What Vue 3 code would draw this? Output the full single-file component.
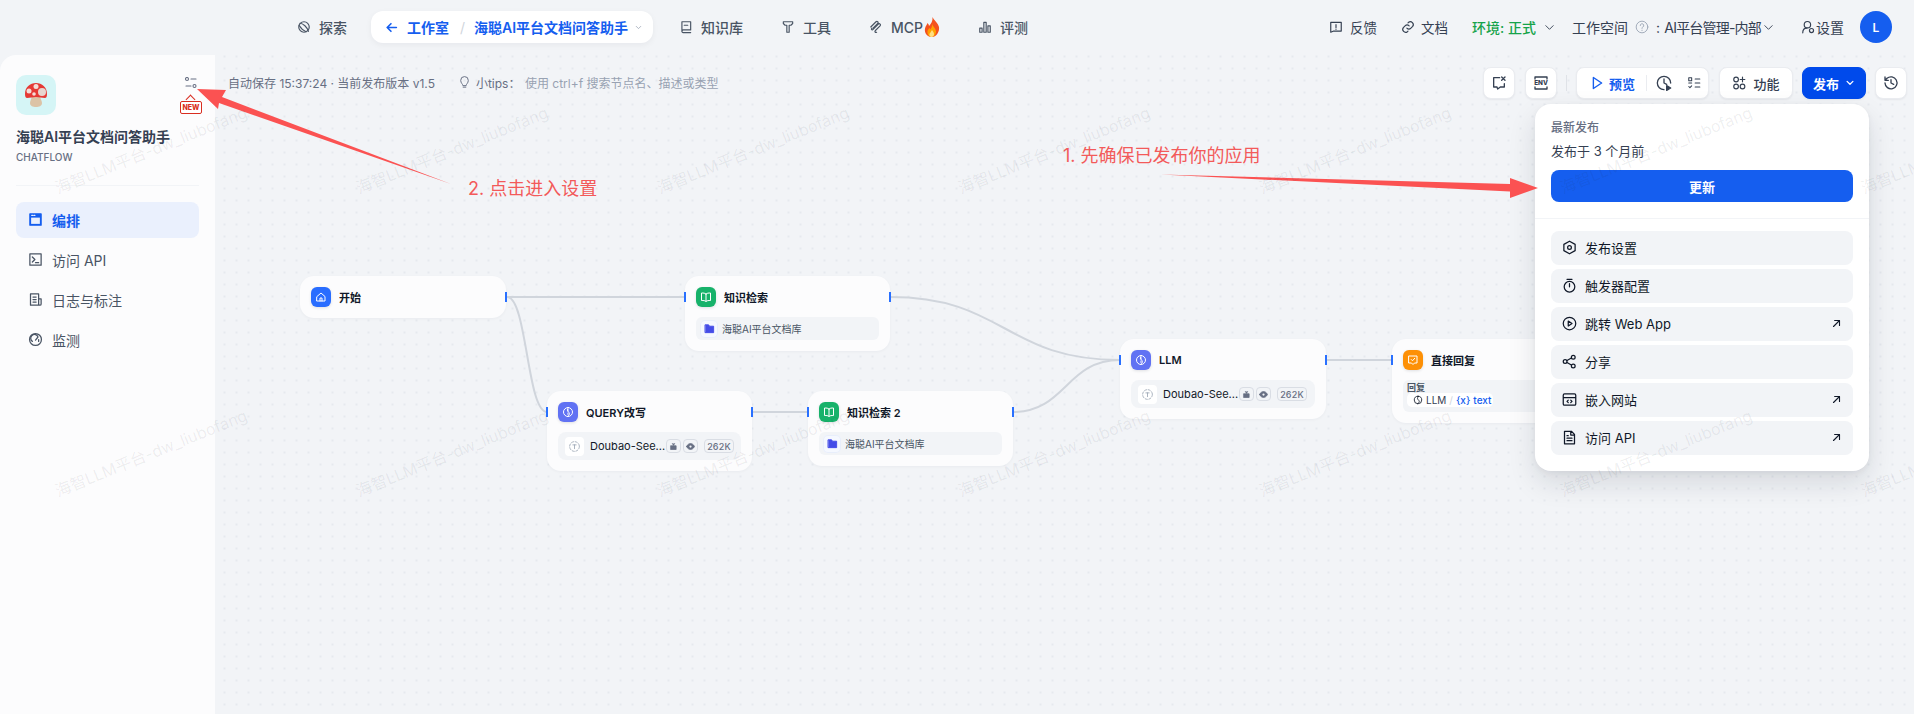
<script setup>
const nodes = [
  { id: 'start', x: 300, y: 276, w: 206, title: '开始', color: '#296dff', icon: 'home', lh: false },
  { id: 'kb1', x: 685, y: 276, w: 205, title: '知识检索', color: '#17b26a', icon: 'book', sub: 'kb', lh: true },
  { id: 'query', x: 547, y: 391, w: 205, title: 'QUERY改写', color: '#6172f3', icon: 'llm', sub: 'model', lh: true },
  { id: 'kb2', x: 808, y: 391, w: 205, title: '知识检索 2', color: '#17b26a', icon: 'book', sub: 'kb', lh: true },
  { id: 'llm', x: 1120, y: 339, w: 206, title: 'LLM', color: '#6172f3', icon: 'llm', sub: 'model', lh: true },
  { id: 'reply', x: 1392, y: 339, w: 206, title: '直接回复', color: '#fd9006', icon: 'reply', sub: 'reply', lh: true },
]
const edges = [
  'M507 297H685',
  'M507 297C527 297 527 412 547 412',
  'M752 412H808',
  'M890 297C1005 297 1005 360 1120 360',
  'M1013 412C1066 412 1066 360 1120 360',
  'M1326 360H1392',
]
const menu = [
  { label: '发布设置', icon: 'hex' },
  { label: '触发器配置', icon: 'timer' },
  { label: '跳转 Web App', icon: 'play', ext: true },
  { label: '分享', icon: 'share' },
  { label: '嵌入网站', icon: 'embed', ext: true },
  { label: '访问 API', icon: 'doc', ext: true },
]
const sideNav = [
  { label: '编排', icon: 'window', active: true },
  { label: '访问 API', icon: 'term' },
  { label: '日志与标注', icon: 'log' },
  { label: '监测', icon: 'gauge' },
]
const watermarks = Array.from({ length: 14 }, (_, i) => i)
</script>

<template>
  <div class="page">
    <header class="top">
      <nav class="nav-left">
        <a class="nav-item">
          <svg viewBox="0 0 24 24"><circle cx="12" cy="12" r="9"/><path d="M5 5.500c5 0 13 7 14.500 14M3.500 9c3 5 7 9 12 11"/></svg>
          探索
        </a>
        <div class="crumb">
          <svg class="crumb-back" viewBox="0 0 24 24"><path d="M21 12H4M11 5l-7 7 7 7"/></svg>
          <span class="crumb-a">工作室</span>
          <span class="crumb-sep">/</span>
          <span class="crumb-b">海聪AI平台文档问答助手</span>
          <svg class="crumb-chev" viewBox="0 0 24 24"><path d="M6 9l6 6 6-6"/></svg>
        </div>
        <a class="nav-item">
          <svg viewBox="0 0 24 24"><path d="M5 3h15v14H7.500A2.500 2.500 0 0 0 5 19.500zM5 19.500A2 2 0 0 0 7.500 21.500H20M9 9h6"/></svg>
          知识库
        </a>
        <a class="nav-item">
          <svg viewBox="0 0 24 24"><path d="M4 3h16v3l-3 3h-3v12h-4V9H7L4 6z"/></svg>
          工具
        </a>
        <a class="nav-item nav-mcp">
          <svg viewBox="0 0 24 24"><path d="M3 12L12 3c2-2 5 1 3 3l-8 8M7 16l9-9c2-2 5 1 3 3l-8 8c-2 2 0 4 2 3M5 14c-2 2 0 4 2 2"/></svg>
          <span>MCP</span>
          <svg class="fire" viewBox="0 0 16 20"><path fill="#f4511e" d="M8.500 0c1 3 5.500 5.500 6.500 10 .8 5-3 10-7 10S0 16.500 1 11.500C1.500 9 3 8 3.500 6c1 1 1.500 2 1.500 3C7 7 9 4 8.500 0z"/><path fill="#ffa000" d="M8 7c.5 2 3.500 4 4 7 .3 3-2 6-4.500 6S3 17 3.500 14C4 12 5 12 5.500 11c.5.500.7 1 .8 1.500C7.500 11 8.300 9.500 8 7z"/><path fill="#ffe082" d="M8 13c.5 1 2 2 2 4 0 2-1 3-2.500 3S5 18.500 5.500 17c.3-1 1.500-2 2.500-4z"/></svg>
        </a>
        <a class="nav-item">
          <svg viewBox="0 0 24 24"><path d="M3 14h4v7H3zM10 4h4v17h-4zM17 10h4v11h-4z"/></svg>
          评测
        </a>
      </nav>
      <div class="nav-right">
        <a class="r-item">
          <svg class="i14" viewBox="0 0 24 24"><path d="M3 4h18v15H8l-5 2zM12 8v5M12 15.500v.5"/></svg>
          反馈
        </a>
        <a class="r-item r-doc">
          <svg class="i14" viewBox="0 0 24 24"><path d="M10 14a5 5 0 0 0 7 0l3-3a5 5 0 0 0-7-7l-1 1M14 10a5 5 0 0 0-7 0l-3 3a5 5 0 0 0 7 7l1-1"/></svg>
          文档
        </a>
        <a class="r-env">
          环境: 正式
          <svg class="chev" viewBox="0 0 24 24"><path d="M4 8l8 8 8-8"/></svg>
        </a>
        <a class="r-space">
          <span>工作空间</span>
          <svg class="q" viewBox="0 0 24 24"><circle cx="12" cy="12" r="10"/><path d="M9 9.500a3 3 0 1 1 4.500 2.500c-1 .6-1.500 1-1.500 2.500M12 17.500v.5"/></svg>
          <span class="r-space-name">: AI平台管理-内部</span>
          <svg class="chev chev-tight" viewBox="0 0 24 24"><path d="M4 8l8 8 8-8"/></svg>
        </a>
        <a class="r-set">
          <svg class="i14" viewBox="0 0 24 24"><circle cx="11" cy="8" r="5.500"/><path d="M3 22c0-5 3-8 7-8"/><circle cx="18" cy="18" r="3.500"/></svg>
          设置
        </a>
        <div class="avatar">L</div>
      </div>
    </header>

    <div class="body">
      <aside class="side">
        <div class="side-head">
          <div class="logo">
            <svg width="24" height="26" viewBox="0 0 24 26">
              <path fill="#dcc3a6" d="M8 14h8c.5 3 2 5 2 7 0 3-3 4-6 4s-6-1-6-4c0-2 1.500-4 2-7z"/>
              <path fill="#e53935" d="M1 12C1 5 6 1 12 1s11 4 11 11c0 3-1 4-2 4-3 0-6-1-9-1s-6 1-9 1c-1 0-2-1-2-4z"/>
              <circle cx="12" cy="4.500" r="2.500" fill="#f5dcd8"/>
              <circle cx="5" cy="9" r="2.500" fill="#f5dcd8"/>
              <circle cx="18" cy="10" r="4" fill="#e8d5cf"/>
              <circle cx="10" cy="12" r="1.800" fill="#f5dcd8"/>
            </svg>
          </div>
          <div class="side-tools">
            <svg class="tune" viewBox="0 0 12 12"><circle cx="2" cy="2" r="1.500"/><path d="M6 2h5M1 9h5"/><circle cx="9.500" cy="9" r="1.500"/></svg>
            <div class="new-badge"><span>NEW</span></div>
          </div>
        </div>
        <div class="app-name">海聪AI平台文档问答助手</div>
        <div class="app-type">CHATFLOW</div>
        <div class="side-line"></div>
        <ul class="side-nav">
          <li v-for="n in sideNav" :key="n.label" class="side-item" :class="{ active: n.active }">
            <svg class="i16" viewBox="0 0 24 24">
              <template v-if="n.icon === 'window'"><path class="filled" d="M3 3h18v18H3z"/><path class="cut" d="M5 9h14v10H5z"/><path class="cut" d="M6 5.500h1.500M9.500 5.500H11"/></template>
              <template v-if="n.icon === 'term'"><path d="M3 3h18v18H3zM7 8l4 4-4 4M12 17h5"/></template>
              <template v-if="n.icon === 'log'"><path d="M4 3h13v18H4zM8 8h5M8 12h5M8 16h5M17 11h4v8a2 2 0 0 1-4 0"/></template>
              <template v-if="n.icon === 'gauge'"><circle cx="12" cy="12" r="9.500"/><path d="M7 15a6 6 0 1 1 9-7M12 13l4-5M17 12v3"/></template>
            </svg>
            <span>{{ n.label }}</span>
          </li>
        </ul>
      </aside>

      <main class="canvas">
        <div class="bar">
          <span class="status">自动保存 15:37:24 · 当前发布版本 v1.5</span>
          <span class="tips">
            <svg class="bulb" viewBox="0 0 24 24"><path d="M9 18c0-2-4-4-4-9a7 7 0 1 1 14 0c0 5-4 7-4 9zM9.500 21.500h5"/></svg>
            <span class="tips-a">小tips：</span>
            <span class="tips-b">使用 ctrl+f 搜索节点名、描述或类型</span>
          </span>
          <div class="actions">
            <button class="btn square">
              <svg class="i16" viewBox="0 0 24 24"><path d="M13 4H4v14h5l1 3 4-3h6v-5M16 3l5 5M21 3l-5 5"/></svg>
            </button>
            <button class="btn square">
              <svg class="i16" viewBox="0 0 24 24"><path d="M3 6V3h18v3M3 18v3h18v-3"/><text x="12" y="15.500" text-anchor="middle" class="env">ENV</text></svg>
            </button>
            <span class="vline"></span>
            <div class="btn group">
              <span class="preview">
                <svg class="play" viewBox="0 0 12 14"><path d="M1.500 1l9 6-9 6z"/></svg>
                预览
              </span>
              <span class="g-sep"></span>
              <svg class="i16" viewBox="0 0 24 24"><path d="M12 22a10 10 0 1 1 10-10M12 6v6l4 2"/><path class="fill-ico" d="M16 16l6 3.500-6 3.500z"/></svg>
              <svg class="i14 check" viewBox="0 0 24 24"><path d="M3 3h5v5H3zM14 5h8M14 12h8M14 19h8M3 12h5M3 18l2 2 3-3"/></svg>
            </div>
            <button class="btn func">
              <svg class="i14" viewBox="0 0 24 24"><circle cx="7" cy="6" r="4"/><circle cx="7" cy="18" r="4"/><circle cx="18" cy="18" r="4"/><path d="M18 2v8M14 6h8"/></svg>
              功能
            </button>
            <button class="btn publish">
              发布
              <svg class="pub-chev" viewBox="0 0 24 24"><path d="M5 8l7 7 7-7"/></svg>
            </button>
            <button class="btn square">
              <svg class="i16" viewBox="0 0 24 24"><path d="M3 12a9 9 0 1 0 3-7L3 8M3 3v5h5M12 7v5l4 2"/></svg>
            </button>
          </div>
        </div>
      </main>
    </div>

    <section class="graph">
      <svg class="edges" width="1914" height="714">
        <path v-for="e in edges" :key="e" :d="e"/>
      </svg>
      <article v-for="n in nodes" :key="n.id" class="node" :style="{ left: n.x + 'px', top: n.y + 'px', width: n.w + 'px' }">
        <i v-if="n.lh" class="handle left"></i>
        <i class="handle right"></i>
        <div class="node-head">
          <span class="node-ico" :style="{ background: n.color }">
            <svg viewBox="0 0 24 24">
              <path v-if="n.icon === 'home'" d="M4 11l8-7 8 7v9H4zM10 20v-6h4v6"/>
              <path v-if="n.icon === 'book'" d="M12 6c-2-2-5-2-9-2v15c4 0 7 0 9 2 2-2 5-2 9-2V4c-4 0-7 0-9 2zM12 6v15"/>
              <path v-if="n.icon === 'llm'" d="M12 3a9 9 0 1 0 0 18 9 9 0 0 0 0-18zM13 3c-3 4-3 6 0 9s3 5-2 9M12 7v3M12 14v3"/>
              <path v-if="n.icon === 'reply'" d="M4 4h16v14h-5l-3 3-3-3H4zM8.500 11l2.500 2.500 4.500-5"/>
            </svg>
          </span>
          <span class="node-title">{{ n.title }}</span>
        </div>
        <div v-if="n.sub === 'kb'" class="row row-kb">
          <span class="kb-box"><svg viewBox="0 0 24 24"><path d="M3 4h7l2 3h9v14H3z"/></svg></span>
          <span class="kb-name">海聪AI平台文档库</span>
        </div>
        <div v-if="n.sub === 'model'" class="row row-model">
          <span class="model-box"><svg viewBox="0 0 24 24"><circle cx="12" cy="12" r="9" stroke-dasharray="4 3.100"/><path d="M9 9h6M12 9v7"/></svg></span>
          <span class="model-name">Doubao-See...</span>
          <span class="tag tag-ico"><svg viewBox="0 0 24 24"><path d="M5 10h14v10H5zM9 4l3 5 3-5"/></svg></span>
          <span class="tag tag-ico"><svg viewBox="0 0 24 24"><path d="M1 12c4-6 7-8 11-8s7 2 11 8c-4 6-7 8-11 8s-7-2-11-8z"/><circle class="eye" cx="12" cy="12" r="3"/></svg></span>
          <span class="tag tag-num">262K</span>
        </div>
        <div v-if="n.sub === 'reply'" class="row row-reply">
          <div class="reply-label">回复</div>
          <div class="reply-pill">
            <svg class="reply-ico" viewBox="0 0 24 24"><path d="M12 3a9 9 0 1 0 0 18 9 9 0 0 0 0-18zM13 3c-3 4-3 6 0 9s3 5-2 9"/></svg>
            <span class="reply-src">LLM</span>
            <span class="reply-slash">/</span>
            <span class="reply-var">{x}</span>
            <span class="reply-var">text</span>
          </div>
        </div>
      </article>
    </section>

    <div class="popup">
      <div class="pop-top">
        <div class="pop-label">最新发布</div>
        <div class="pop-time">发布于 3 个月前</div>
        <button class="pop-update">更新</button>
      </div>
      <div class="pop-list">
        <div v-for="m in menu" :key="m.label" class="pop-item">
          <svg class="i16 pop-ico" viewBox="0 0 24 24">
            <template v-if="m.icon === 'hex'"><path d="M12 2l9 5v10l-9 5-9-5V7z"/><circle cx="12" cy="12" r="3"/></template>
            <template v-if="m.icon === 'timer'"><circle cx="12" cy="14" r="8.500"/><path d="M8 2h8M12 9v5"/></template>
            <template v-if="m.icon === 'play'"><circle cx="12" cy="12" r="10"/><path d="M10 8l6 4-6 4z"/></template>
            <template v-if="m.icon === 'share'"><circle cx="18" cy="5" r="3"/><circle cx="5" cy="12" r="3"/><circle cx="18" cy="19" r="3"/><path d="M8 10.500l7-4M8 13.500l7 4"/></template>
            <template v-if="m.icon === 'embed'"><path d="M4 3h16a2 2 0 0 1 2 2v14a2 2 0 0 1-2 2H4a2 2 0 0 1-2-2V5a2 2 0 0 1 2-2zM2 9h20M10 13l-2 2 2 2M14 13l2 2-2 2"/></template>
            <template v-if="m.icon === 'doc'"><path d="M4 2h11l5 5v15H4zM14 2v6h6M8 13h8M8 17h8M8 9h2"/></template>
          </svg>
          <span class="pop-text">{{ m.label }}</span>
          <svg v-if="m.ext" class="pop-ext" viewBox="0 0 12 12"><path d="M2 10l8-8M3.500 2H10v6.500"/></svg>
        </div>
      </div>
    </div>

    <div class="note note-a">1. 先确保已发布你的应用</div>
    <div class="note note-b">2. 点击进入设置</div>
    <svg class="arrows" width="1914" height="714">
      <polygon points="1161,174.500 1510,184 1510,178 1538,188 1510,198 1510,191.500"/>
      <polygon points="197,89 226,90 222,97 451,184 219,103 218,109"/>
    </svg>

    <div class="marks">
      <span v-for="m in watermarks" :key="m" class="mark"><b>海智LLM平台-dw_liubofang</b></span>
    </div>
  </div>
</template>

<style>
html, body { margin: 0; background: #f2f4f7; }
</style>

<style scoped>
.page {
  position: relative;
  display: flex;
  flex-direction: column;
  width: 1914px;
  height: 714px;
  overflow: hidden;
  background: #f2f4f7;
  font-family: Inter, "Noto Sans CJK SC", sans-serif;
  color: #354052;
}
svg { fill: none; stroke: currentColor; stroke-width: 2; stroke-linejoin: round; stroke-linecap: round; flex: none; }
.i16 { width: 16px; height: 16px; }
.i14 { width: 14px; height: 14px; }

.top { display: flex; align-items: center; height: 55px; padding: 0 22px 1px 297px; box-sizing: border-box; flex: none; }
.nav-left { display: flex; align-items: center; gap: 38px; }
.nav-item { display: flex; align-items: center; gap: 8px; font-size: 14px; font-weight: 500; color: #495464; white-space: nowrap; }
.nav-item > svg { width: 14px; height: 14px; }
.nav-item > .fire { width: 16px; height: 20px; margin-left: -7px; stroke: none; }
.crumb { display: flex; align-items: center; height: 32px; width: 282px; margin: 0 -12px 0 -14px; padding-left: 14px; box-sizing: border-box; background: #fff; border-radius: 12px; box-shadow: 0 2px 6px rgba(16, 24, 40, .05); color: #155eef; font-size: 14px; font-weight: 600; white-space: nowrap; }
.crumb-back { width: 13px; height: 13px; stroke-width: 3; margin-right: 9px; }
.crumb-sep { color: #d0d5dc; font-weight: 400; margin: 0 9px 0 11px; }
.crumb-chev { width: 9px; height: 9px; margin-left: 6px; color: #98a2b2; }
.nav-right { display: flex; align-items: center; margin-left: auto; font-size: 14px; color: #354052; white-space: nowrap; }
.r-item { display: flex; align-items: center; gap: 7px; font-size: 13.500px; }
.r-set { display: flex; align-items: center; gap: 1px; margin-left: 27px; }
.r-doc { gap: 6px; margin-left: 24px; }
.r-env { display: flex; align-items: center; gap: 8px; margin-left: 24px; color: #16a34a; font-weight: 500; }
.chev { width: 11px; height: 11px; stroke-width: 2; color: #354052; }
.r-space { display: flex; align-items: center; margin-left: 17px; }
.q { width: 14px; height: 14px; margin: 0 7px; color: #98a2b2; stroke-width: 1.500; }
.r-space-name { letter-spacing: -.8px; word-spacing: 2px; }
.chev-tight { margin-left: 2px; }
.avatar { display: flex; align-items: center; justify-content: center; width: 32px; height: 32px; margin-left: 16px; border-radius: 50%; background: #155eef; color: #fff; font-size: 12px; font-weight: 600; }

.body { display: flex; flex: 1; min-height: 0; }
.side { width: 215px; flex: none; padding: 20px 16px 0; box-sizing: border-box; background: #fcfcfd; border-radius: 16px 0 0 0; }
.side-head { display: flex; justify-content: space-between; }
.logo { display: flex; align-items: center; justify-content: center; width: 40px; height: 40px; border-radius: 10px; background: #d5f5f6; }
.logo svg { stroke: none; }
.side-tools { display: flex; flex-direction: column; align-items: center; margin: 2px -3px 0 0; }
.tune { width: 12px; height: 12px; color: #676f83; stroke-width: 1.100; }
.new-badge { position: relative; display: flex; align-items: center; justify-content: center; width: 22px; height: 13px; margin-top: 12px; box-sizing: border-box; border: 1.500px solid #d92d20; border-radius: 2px; background: #fff; }
.new-badge::before { content: ""; position: absolute; top: -6px; left: 6px; width: 7px; height: 7px; box-sizing: border-box; border: 1.500px solid #d92d20; border-width: 1.500px 0 0 1.500px; transform: rotate(45deg); }
.new-badge span { font-size: 7px; line-height: 1; font-weight: 800; color: #d92d20; }
.app-name { margin-top: 12px; font-size: 14px; line-height: 20px; font-weight: 600; color: #354052; white-space: nowrap; }
.app-type { margin-top: 3px; font-size: 10px; line-height: 14px; font-weight: 500; color: #676f83; }
.side-line { height: 1px; margin-top: 21px; background: #f2f4f7; }
.side-nav { display: flex; flex-direction: column; gap: 4px; margin: 16px 0 0; padding: 0; list-style: none; }
.side-item { display: flex; align-items: center; gap: 9px; height: 36px; padding: 0 0 1px 12px; box-sizing: border-box; border-radius: 8px; font-size: 14px; color: #495464; }
.side-item svg { width: 15px; height: 15px; }
.side-item.active { background: #eaf0fd; color: #155eef; font-weight: 600; }
.filled { fill: currentColor; }
.cut { fill: #eaf0fd; stroke: none; }
.cut + .cut { stroke: #eaf0fd; }

.canvas { flex: 1; min-width: 0; background-color: #f2f4f7; background-image: radial-gradient(circle, #e6e9ee .8px, transparent 1px); background-size: 12px 12px; background-position: 3.500px 7.500px; }
.bar { display: flex; align-items: center; height: 32px; margin-top: 12px; padding: 0 7px 0 13px; font-size: 12px; }
.status { padding-bottom: 2px; color: #676f83; white-space: nowrap; }
.tips { display: flex; align-items: center; margin-left: 23px; padding-bottom: 2px; white-space: nowrap; }
.bulb { width: 13px; height: 16px; margin-right: 5px; color: #676f83; stroke-width: 1.800; }
.tips-a { color: #676f83; width: 49px; }
.tips-b { color: #98a2b2; }
.actions { display: flex; align-items: center; gap: 10px; margin-left: auto; }
.btn { display: flex; align-items: center; height: 32px; padding: 0; box-sizing: border-box; border: 1px solid #eaecf0; border-radius: 8px; background: #fff; box-shadow: 0 1px 2px rgba(16, 24, 40, .06); color: #354052; font-family: inherit; font-size: 13px; font-weight: 500; }
.square { justify-content: center; width: 32px; }
.vline { width: 1px; height: 16px; margin: 0 -1px 0 -1px; background: #dfe2e7; }
.group { width: 133px; padding-left: 15px; }
.preview { display: flex; align-items: center; gap: 6px; color: #155eef; font-weight: 600; }
.play { width: 11px; height: 14px; stroke-width: 1.500; }
.g-sep { width: 1px; height: 16px; margin: 0 9px 0 11px; background: #eaecf0; }
.fill-ico { fill: currentColor; }
.check { margin-left: 15px; stroke-width: 1.800; }
.env { font-family: Inter, sans-serif; font-size: 9.500px; font-weight: 800; fill: currentColor; stroke: none; }
.func { gap: 7px; justify-content: center; width: 74px; }
.publish { gap: 6px; justify-content: center; width: 64px; margin-left: -1px; border-color: #004aeb; background: #004aeb; color: #fff; font-weight: 600; }
.pub-chev { width: 10px; height: 10px; stroke-width: 3; }
.publish + .btn { margin-left: -1px; }

.graph { position: absolute; inset: 0; pointer-events: none; }
.edges { position: absolute; inset: 0; }
.edges path { stroke: #d0d5dc; stroke-width: 2; }
.node { position: absolute; padding: 11px; box-sizing: border-box; background: #fcfcfd; border-radius: 14px; box-shadow: 0 1px 3px rgba(16, 24, 40, .04); }
.handle { position: absolute; top: 16px; width: 2px; height: 10px; background: #2970ff; }
.handle.left { left: -1px; }
.handle.right { right: -1px; }
.node-head { display: flex; align-items: center; gap: 8px; height: 20px; }
.node-ico { display: flex; align-items: center; justify-content: center; width: 20px; height: 20px; border-radius: 6px; color: #fff; box-shadow: 0 1px 3px rgba(16, 24, 40, .12); }
.node-ico svg { width: 12px; height: 12px; }
.node-title { font-size: 11px; font-weight: 600; color: #101828; white-space: nowrap; }
.row { display: flex; align-items: center; margin-top: 10px; border-radius: 6px; background: #f2f4f7; }
.row-kb { height: 23px; padding-left: 4px; }
.kb-box { display: flex; align-items: center; justify-content: center; width: 18px; height: 18px; border-radius: 5px; background: #f5f8ff; box-shadow: inset 0 0 0 1px #e8eefb; color: #444ce7; }
.kb-box svg { width: 11px; height: 11px; fill: currentColor; }
.kb-name { margin-left: 4px; font-size: 10px; color: #495464; white-space: nowrap; }
.row-model { height: 28px; padding-left: 7px; border-radius: 8px; }
.model-box { display: flex; align-items: center; justify-content: center; width: 19px; height: 19px; border-radius: 4px; background: #fff; color: #98a2b2; }
.model-box svg { width: 13px; height: 13px; stroke-width: 1.500; }
.model-name { width: 76px; margin-left: 6px; font-size: 11px; color: #101828; white-space: nowrap; }
.tag { display: flex; align-items: center; justify-content: center; height: 14px; box-sizing: border-box; border: 1px solid #d9dde4; border-radius: 4px; color: #676f83; }
.tag-ico { width: 15px; margin-right: 2px; }
.tag-ico svg { width: 9px; height: 9px; fill: currentColor; }
.eye { fill: #f2f4f7; stroke: none; }
.tag-num { width: 30px; margin-left: 4px; font-size: 9px; font-weight: 500; letter-spacing: .2px; }
.row-reply { display: block; height: 32px; padding: 2px 0 0 4px; box-sizing: border-box; background: #f2f4f7; }
.reply-label { height: 11px; font-size: 9px; line-height: 11px; font-weight: 600; color: #495464; }
.reply-pill { display: flex; align-items: center; gap: 3px; width: 86px; height: 14px; padding-left: 6px; box-sizing: border-box; border-radius: 5px; background: #fff; font-size: 10px; }
.reply-ico { width: 10px; height: 10px; color: #101828; }
.reply-src { color: #354052; }
.reply-slash { color: #d0d5dc; }
.reply-var { color: #155eef; font-weight: 500; }

.popup { position: absolute; top: 104px; left: 1535px; width: 334px; height: 367px; box-sizing: border-box; border-radius: 16px; background: #fff; box-shadow: 0 12px 28px rgba(16, 24, 40, .12), 0 2px 6px rgba(16, 24, 40, .05); }
.pop-top { height: 115px; padding: 16px 16px 0; box-sizing: border-box; border-bottom: 1px solid #f2f4f7; }
.pop-label { font-size: 12px; line-height: 16px; font-weight: 500; color: #676f83; }
.pop-time { margin-top: 6px; font-size: 13px; line-height: 18px; color: #354052; }
.pop-update { display: block; width: 100%; height: 32px; margin-top: 10px; border: 0; border-radius: 8px; background: #155eef; color: #fff; font-family: inherit; font-size: 13px; font-weight: 600; }
.pop-list { display: flex; flex-direction: column; gap: 4px; padding: 12px 16px 0; }
.pop-item { display: flex; align-items: center; height: 34px; padding: 0 12px 1px 11px; box-sizing: border-box; border-radius: 8px; background: #f2f4f7; font-size: 13px; color: #101828; }
.pop-ico { width: 15px; height: 15px; }
.pop-text { margin-left: 8px; }
.pop-ext { width: 9px; height: 9px; margin-left: auto; stroke-width: 1.500; }

.note { position: absolute; font-size: 18px; line-height: 24px; color: #f35a5a; white-space: nowrap; }
.note-a { left: 1063px; top: 144px; }
.note-b { left: 468px; top: 177px; }
.arrows { position: absolute; inset: 0; pointer-events: none; stroke: none; }
.arrows polygon { fill: #fb5252; stroke: none; }

.marks { position: absolute; top: -3px; left: 0; display: grid; grid-template-columns: repeat(7, 301px); grid-auto-rows: 303px; pointer-events: none; }
.mark { display: flex; align-items: center; justify-content: center; }
.mark b { font-size: 16px; font-weight: 400; color: rgba(30, 40, 60, .08); white-space: nowrap; transform: rotate(-22deg); }
</style>
